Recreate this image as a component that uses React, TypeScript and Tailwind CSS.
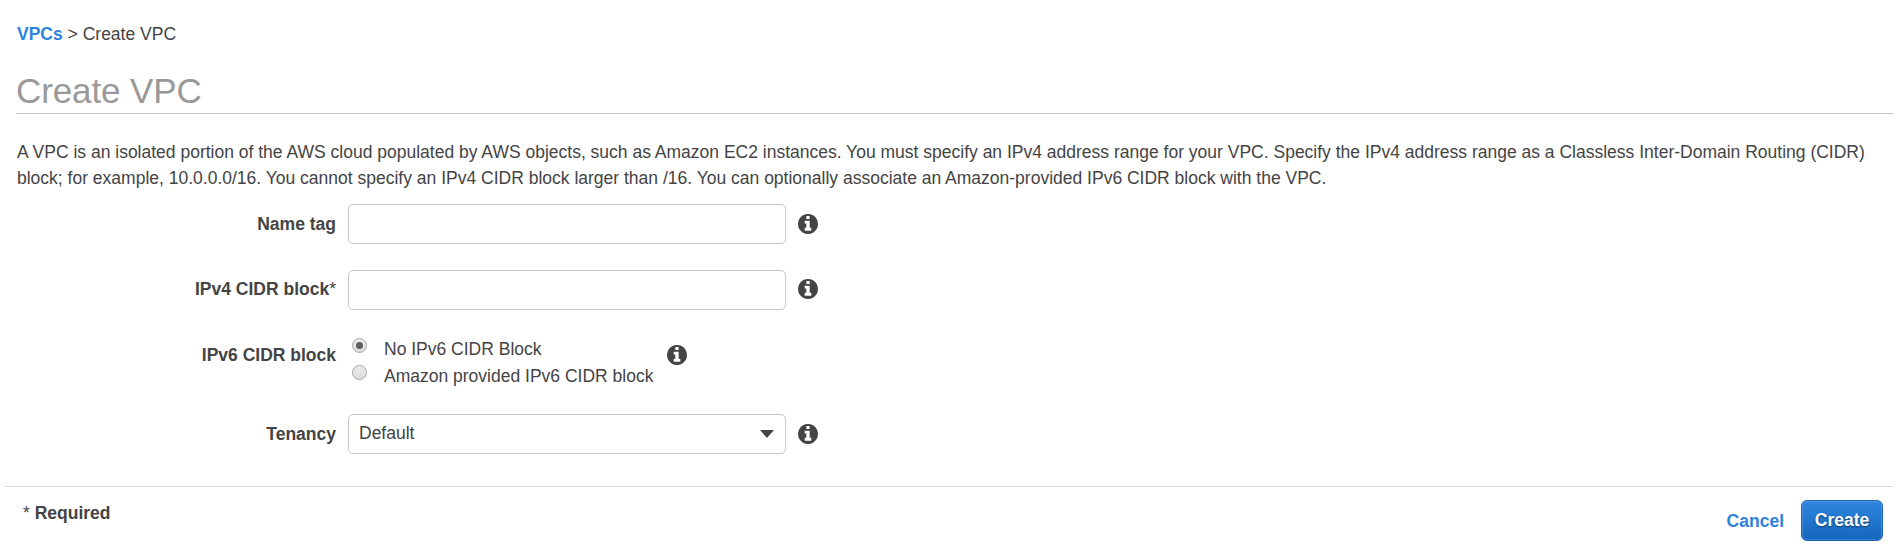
import React from "react";

function InfoIcon({ className = "" }: { className?: string }) {
  return (
    <svg viewBox="0 128 1536 1536" className={`h-5 w-5 shrink-0 fill-[#444] ${className}`} aria-hidden="true">
      <path d="M1024 1376v-160q0-14-9-23t-23-9h-96v-512q0-14-9-23t-23-9h-320q-14 0-23 9t-9 23v160q0 14 9 23t23 9h96v320h-96q-14 0-23 9t-9 23v160q0 14 9 23t23 9h448q14 0 23-9t9-23zm-128-896v-160q0-14-9-23t-23-9h-192q-14 0-23 9t-9 23v160q0 14 9 23t23 9h192q14 0 23-9t9-23zm640 416q0 209-103 385.5t-279.5 279.5-385.5 103-385.5-103-279.5-279.5-103-385.5 103-385.5 279.5-279.5 385.5-103 385.5 103 279.5 279.5 103 385.5z" />
    </svg>
  );
}

function Label({ children, className = "" }: { children: React.ReactNode; className?: string }) {
  return <div className={`w-[336px] shrink-0 text-right font-bold ${className}`}>{children}</div>;
}

function Radio({ checked = false }: { checked?: boolean }) {
  return (
    <span
      role="radio"
      aria-checked={checked}
      className="flex h-[15px] w-[15px] shrink-0 items-center justify-center rounded-full border border-[#a6a6a6] bg-linear-to-b from-[#ececec] to-[#dcdcdc]"
    >
      {checked && <span className="h-[7px] w-[7px] rounded-full bg-[#5c5c5c]" />}
    </span>
  );
}

export default function App() {
  return (
    <div className="flex h-[557px] w-[1897px] flex-col bg-white font-['Liberation_Sans',Arial,sans-serif] text-[17.5px] leading-[26px] text-[#444]">
      <nav className="pt-[21px] pl-[17px]">
        <a className="font-bold text-[#2e83dd]">VPCs</a> &gt; Create VPC
      </nav>
      <h1 className="mr-1 ml-4 mt-[23px] h-[44px] border-b border-[#c8c8c8] pt-px text-[35px] leading-[40px] tracking-[-0.1px] text-[#999]">
        Create VPC
      </h1>
      <p className="mt-[25px] h-[52px] pl-[17px] whitespace-nowrap">
        A VPC is an isolated portion of the AWS cloud populated by AWS objects, such as Amazon EC2 instances. You must
        specify an IPv4 address range for your VPC. Specify the IPv4 address range as a Classless Inter-Domain Routing
        (CIDR)
        <br />
        block; for example, 10.0.0.0/16. You cannot specify an IPv4 CIDR block larger than /16. You can optionally
        associate an Amazon-provided IPv6 CIDR block with the VPC.
      </p>

      <div className="mt-[13px] flex h-10 items-start">
        <Label className="pt-[7px]">Name tag</Label>
        <input aria-label="Name tag" className="ml-3 h-10 w-[438px] rounded-[5px] border border-[#c8c8c8] outline-none" />
        <InfoIcon className="mt-[10px] ml-3" />
      </div>

      <div className="mt-[26px] flex h-10 items-start">
        <Label className="pt-[6px]">
          IPv4 CIDR block<span className="font-normal">*</span>
        </Label>
        <input aria-label="IPv4 CIDR block" className="ml-3 h-10 w-[438px] rounded-[5px] border border-[#c8c8c8] outline-none" />
        <InfoIcon className="mt-[9px] ml-3" />
      </div>

      <div className="mt-[26px] flex h-[54px] items-start">
        <Label className="pt-[6px]">IPv6 CIDR block</Label>
        <div className="ml-4 flex flex-col gap-3 pt-[2px]">
          <Radio checked />
          <Radio />
        </div>
        <div className="ml-[17px] flex flex-col gap-px">
          <span>No IPv6 CIDR Block</span>
          <span>Amazon provided IPv6 CIDR block</span>
        </div>
        <InfoIcon className="mt-[9px] ml-[13.5px]" />
      </div>

      <div className="mt-[24px] flex h-10 items-start">
        <Label className="pt-[7px]">Tenancy</Label>
        <div className="ml-3 flex h-10 w-[438px] items-start justify-between rounded-[5px] border border-[#c8c8c8] pt-[5px] pr-[11px] pl-[10px]">
          <span>Default</span>
          <svg viewBox="0 0 14 8" className="mt-[10px] h-2 w-3.5 fill-[#444]" aria-hidden="true">
            <path d="M0 0H14L7 8Z" />
          </svg>
        </div>
        <InfoIcon className="mt-[10px] ml-3" />
      </div>

      <footer className="mx-1 mt-8 flex items-start justify-between border-t border-[#dcdcdc]">
        <div className="pt-[13px] pl-[19px] font-bold">
          <span className="font-normal">*</span> Required
        </div>
        <div className="flex items-start pt-[13px] pr-[10px] font-bold">
          <a className="pt-[8px] text-[#2e83dd]">Cancel</a>
          <button className="ml-[17px] h-[41px] w-[82px] rounded-[6px] border border-[#1d65b0] bg-linear-to-b from-[#2f86de] to-[#1566bd] pb-px font-bold text-white shadow-[inset_0_0_0_1px_rgba(255,255,255,0.15)] text-shadow-[0_1px_2px_rgba(0,0,0,0.5)]">
            Create
          </button>
        </div>
      </footer>
    </div>
  );
}
